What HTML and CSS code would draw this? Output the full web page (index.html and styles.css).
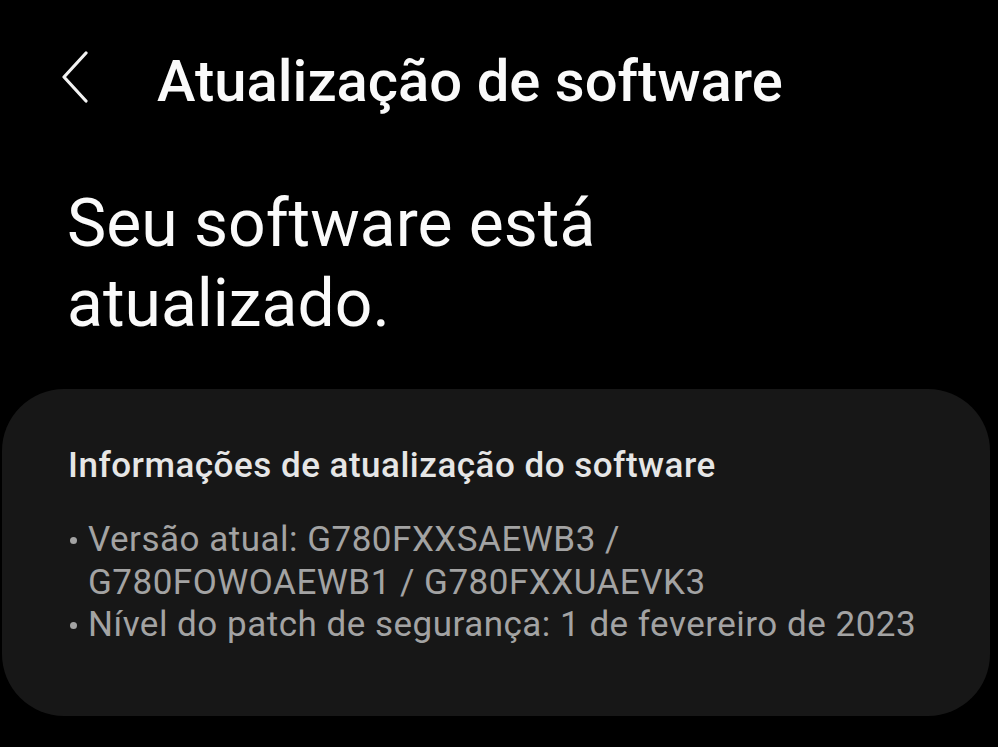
FILE: index.html
```html
<!DOCTYPE html>
<html lang="pt">
<head>
    <meta charset="UTF-8">
    <meta name="viewport" content="width=device-width, initial-scale=1.0">
    <title>Atualização de software</title>
    <link rel="stylesheet" href="styles.css">
</head>
<body>
    <header class="top-bar">
        <svg class="back" width="30" height="52" viewBox="0 0 30 52">
            <path d="M26 2 L4 26 L26 50" fill="none" stroke="#f2f2f2" stroke-width="3.2" stroke-linecap="round" stroke-linejoin="round"/>
        </svg>
        <h1>Atualização de software</h1>
    </header>

    <h2 class="status">Seu software está<br>atualizado.</h2>

    <section class="card">
        <h3>Informações de atualização do software</h3>
        <ul class="info">
            <li>Versão atual: G780FXXSAEWB3 /<br>G780FOWOAEWB1 / G780FXXUAEVK3</li>
            <li>Nível do patch de segurança: 1 de fevereiro de 2023</li>
        </ul>
    </section>
</body>
</html>
```

FILE: styles.css
```css
body {
    font-family: Roboto, "Noto Sans", sans-serif;
    background-color: #000;
    color: #fafafa;
    margin: 0;
    padding: 0;
}

.top-bar {
    display: flex;
    align-items: center;
    height: 130px;
    padding: 24px 0 0 60px;
    box-sizing: border-box;
}

.back {
    display: block;
    margin-right: 67px;
}

.top-bar h1 {
    margin: 8px 0 0;
    font-size: 58px;
    font-weight: 500;
}

.status {
    margin: 54px 0 0 67px;
    font-size: 66px;
    font-weight: 400;
    line-height: 80px;
}

.card {
    margin: 45px 8px 0 2px;
    padding: 56px 66px 69px;
    background-color: #171717;
    border-radius: 62px;
}

.card h3 {
    margin: 0;
    font-size: 35px;
    font-weight: 500;
    letter-spacing: 0.5px;
    color: #e6e6e6;
}

.info {
    list-style: none;
    margin: 33px 0 0;
    padding: 0;
    color: #a3a3a3;
    font-size: 35px;
    letter-spacing: 0.5px;
    line-height: 42.5px;
}

.info li {
    position: relative;
    padding-left: 20px;
}

.info li::before {
    content: "";
    position: absolute;
    left: 2px;
    top: 18px;
    width: 7px;
    height: 7px;
    border-radius: 50%;
    background-color: #a3a3a3;
}
```
